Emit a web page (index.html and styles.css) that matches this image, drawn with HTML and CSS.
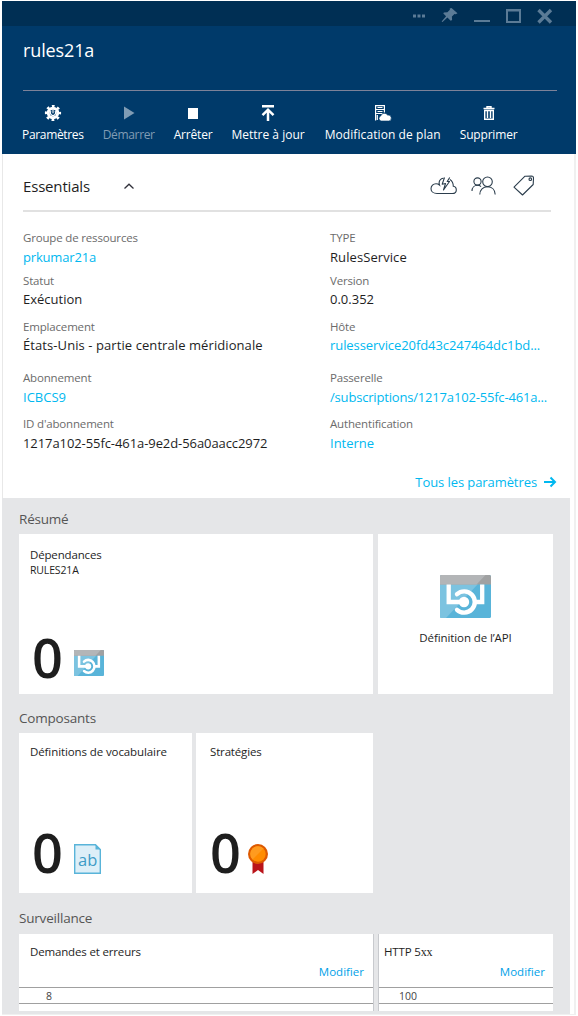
FILE: index.html
```html
<!DOCTYPE html>
<html lang="fr">
<head>
<meta charset="utf-8">
<title>rules21a</title>
<link rel="stylesheet" href="styles.css">
</head>
<body>
<svg class="defs" width="0" height="0">
  <symbol id="api" viewBox="0 0 51 43">
    <rect width="51" height="43" rx="1.5" fill="#59b4d9"/>
    <path d="M0 9h38L6 43H1.500Q0 43 0 41.500z" fill="#7cc3e0"/>
    <path d="M0 9.500V1.500Q0 0 1.500 0h48Q51 0 51 1.500v8z" fill="#a0a1a2"/>
    <path d="M0 9.500V1.500Q0 0 1.500 0H45.500L36.500 9.500z" fill="#b3b5b7"/>
    <path d="M8.700 9.500v17.500H24" fill="none" stroke="#fff" stroke-width="4.300"/>
    <path d="M42.200 9.500v17.500h-8" fill="none" stroke="#fff" stroke-width="4.300"/>
    <circle cx="24" cy="27" r="5.200" fill="#fff"/>
    <path d="M17 19.200A10.600 10.600 0 1 1 17 34.800" fill="none" stroke="#fff" stroke-width="4.400" stroke-linecap="round"/>
  </symbol>
</svg>
<div class="blade">
  <header class="header">
    <div class="titlebar">
      <svg width="144" height="24" viewBox="0 0 144 24" fill="#5b7b96">
        <path d="M3 13.500h3v3H3zM7.500 13.500h3v3h-3zM12 13.500h3v3h-3z"/>
        <path d="M41.500 7l6 5.300-1.800.9-1.200-.3-2.600 2.600.2 3.500-1.400.7-3.300-3.300-4.900 4.600-.9-.4 4.500-5.400-2.800-2.600.6-1.200 3.500-.1 2.500-2.500-.2-1.200z"/>
        <path d="M64 19h16v2H64z"/>
        <path d="M96 8h15v14H96zM98 10.500v9.500h11v-9.500z" fill-rule="evenodd"/>
        <path d="M128.500 9l12.500 12.500M141 9l-12.500 12.500" stroke="#5b7b96" stroke-width="3.400"/>
      </svg>
    </div>
    <h1 class="title">rules21a</h1>
    <nav class="toolbar">
      <a class="cmd tight"><svg width="18" height="18" viewBox="0 0 18 18"><circle cx="9" cy="9" r="4.700" fill="none" stroke="#fff" stroke-width="3"/><circle cx="9" cy="9" r="6.900" fill="none" stroke="#fff" stroke-width="2.400" stroke-dasharray="2.700 2.720" stroke-dashoffset="1.350"/><path d="M9 5.500v3.800M11 7.200a2.600 2.600 0 1 1-4 0" fill="none" stroke="#fff" stroke-width="1.100"/></svg><span>Paramètres</span></a>
      <a class="cmd tight off"><svg width="18" height="18" viewBox="0 0 18 18"><path d="M4 2.500v13L14.500 9z" fill="#809cb4"/></svg><span>Démarrer</span></a>
      <a class="cmd snug"><svg width="18" height="18" viewBox="0 0 18 18"><path d="M4 4h10v11H4z" fill="#fff"/></svg><span>Arrêter</span></a>
      <a class="cmd"><svg width="18" height="18" viewBox="0 0 18 18"><path d="M3 1h12v2.500H3z" fill="#fff"/><path d="M9 17V6M3.500 11.200L9 5.700l5.500 5.500" fill="none" stroke="#fff" stroke-width="2.500"/></svg><span>Mettre à jour</span></a>
      <a class="cmd wide plan"><svg width="18" height="18" viewBox="0 0 18 18"><path d="M1.600 1.600h8.800v7M1.600 1v15.500M1.600 5.500h8.800M1.600 9.500h7M10.400 2v6M3.500 3.500h5M3.500 7.500h5M3.300 11v5" fill="none" stroke="#fff" stroke-width="1.200"/><path d="M7 17a2.600 2.600 0 0 1-.3-5 3.800 3.800 0 0 1 6.900-.9 3 3 0 0 1 1.300 5.900z" fill="#fff" stroke="#003a6a" stroke-width=".6"/></svg><span>Modification de plan</span></a>
      <a class="cmd snug"><svg width="18" height="18" viewBox="0 0 18 18"><path d="M3.500 4.500h11M7 4V2.700h4V4M4.700 6.500v8.800h8.600V6.500zM7.500 7v7M10.500 7v7" fill="none" stroke="#fff" stroke-width="1.400"/></svg><span>Supprimer</span></a>
    </nav>
  </header>

  <div class="body">
  <section class="essentials">
    <div class="ess-head">
      <h2 class="ess-title">Essentials</h2>
      <svg width="12" height="8" viewBox="0 0 12 8"><path d="M1.500 6.500L6 2.200l4.500 4.300" fill="none" stroke="#32323c" stroke-width="1.300"/></svg>
      <svg class="ess-icons" width="106" height="24" viewBox="0 0 106 24" fill="none" stroke="#2b3d4c" stroke-width="1.100">
        <path d="M7 20.500c-3.400 0-6-2-6-4.800 0-3 2.300-5 5-5 1.600 0 2.300.3 3.500 1.300-.8-2.500-.5-4.200 1.200-5.700 1-.9 2-1.100 2.900-1.100M19.800 6.500c2.500 1.500 3.500 4 3.500 6.700 2.300.3 3 2 3 3.700 0 2.300-1.500 3.600-4 3.600H7"/>
        <path d="M14.500 4.500l-2.300 6.800 3.300-.8-2 6.500 6-8.500h-2.300l2.500-4" stroke-linejoin="round"/>
        <circle cx="47.500" cy="8.500" r="3.600"/><path d="M42 18c0-3.500 2.500-5.700 5.500-5.700 1.500 0 2.700.5 3.500 1.300"/>
        <circle cx="57.500" cy="8.800" r="4.800"/><path d="M49.800 21.500c0-4.800 3.300-7.700 7.700-7.700s7.500 2.900 7.700 7.700"/>
        <path d="M84 14.200L95 3.200l6.500-.2c1.200 0 2 .8 2 2l-.3 6.500-10.700 10.500z" stroke-linejoin="round"/><circle cx="100.300" cy="6.200" r="1.300"/>
      </svg>
    </div>
    <dl class="props">
      <div><dt>Groupe de ressources</dt><dd class="link snug">prkumar21a</dd></div>
      <div><dt>TYPE</dt><dd class="wide">RulesService</dd></div>
      <div class="close"><dt>Statut</dt><dd>Exécution</dd></div>
      <div class="close"><dt>Version</dt><dd>0.0.352</dd></div>
      <div class="close"><dt>Emplacement</dt><dd class="wide">États-Unis - partie centrale méridionale</dd></div>
      <div class="close"><dt>Hôte</dt><dd class="link slim">rulesservice20fd43c247464dc1bd...</dd></div>
      <div><dt>Abonnement</dt><dd class="link">ICBCS9</dd></div>
      <div><dt>Passerelle</dt><dd class="link snug">/subscriptions/1217a102-55fc-461a...</dd></div>
      <div><dt>ID d'abonnement</dt><dd class="slim">1217a102-55fc-461a-9e2d-56a0aacc2972</dd></div>
      <div><dt>Authentification</dt><dd class="link">Interne</dd></div>
    </dl>
    <a class="all link"><span class="slim">Tous les paramètres</span><svg width="13" height="12" viewBox="0 0 13 12"><path d="M0 6h11M6.500 1.500L11 6l-4.500 4.500" fill="none" stroke="#00b8f0" stroke-width="2"/></svg></a>
  </section>

  <main class="lens">
    <h3 class="group">Résumé</h3>
    <div class="tiles summary">
      <article class="tile">
        <h4>Dépendances</h4><p class="sub">RULES21A</p>
        <div class="count"><b>0</b><svg class="i-api" width="30" height="26" viewBox="0 0 51 43" preserveAspectRatio="none"><use href="#api" width="51" height="43"/></svg></div>
      </article>
      <article class="tile center">
        <svg width="51" height="43"><use href="#api"/></svg>
        <h4 class="slim">Définition de l’API</h4>
      </article>
    </div>
    <h3 class="group">Composants</h3>
    <div class="tiles parts">
      <article class="tile">
        <h4 class="slim">Définitions de vocabulaire</h4>
        <div class="count"><b>0</b><svg width="27" height="30" viewBox="0 0 27 30"><path d="M.7.700h20.800l4.800 4.800v23.800H.7z" fill="#ddeff8" stroke="#59b4d9" stroke-width="1.400"/><path d="M21.500.500v5h5z" fill="#59b4d9"/><text class="ab" x="4" y="22">ab</text></svg></div>
      </article>
      <article class="tile policies">
        <h4>Stratégies</h4>
        <div class="count"><b>0</b><svg width="20" height="30" viewBox="0 0 20 30"><path d="M4.500 17h11v13l-5.500-4-5.500 4z" fill="#ba141a"/><circle cx="10" cy="10" r="10" fill="#dd5900"/><circle cx="10" cy="10" r="7.700" fill="#ff8c00"/><path d="M4.500 15.500A7.700 7.700 0 0 1 15.500 4.500z" fill="#ff9b1f"/></svg></div>
      </article>
    </div>
    <h3 class="group last">Surveillance</h3>
    <div class="tiles charts">
      <article class="tile chart"><h4>Demandes et erreurs</h4><a class="edit">Modifier</a><div class="axis">8</div></article>
      <article class="tile chart second"><h4>HTTP 5<i>xx</i></h4><a class="edit">Modifier</a><div class="axis">100</div></article>
    </div>
  </main>
  </div>
</div>
</body>
</html>
```
FILE: styles.css
```css
* { box-sizing: border-box; }
body {
  margin: 0;
  background: #fff;
  color: #1e1e1e;
  font-family: "Open Sans", "Noto Sans", sans-serif;
  font-size: 13px;
}
h1, h2, h3, h4, p, dl, dd { margin: 0; font-weight: 400; }
svg { display: block; flex: none; }
.defs { position: absolute; }
.link { color: #00b8f0; }

.blade {
  width: 574px;
  height: 1014px;
  margin: 1px 0 0 2px;
  overflow: hidden;
}
.header {
  height: 153px;
  background: #003a6a;
  color: #fff;
}
.titlebar {
  display: flex;
  justify-content: flex-end;
  height: 25px;
  padding-right: 22px;
  background: #002f54;
}
.title {
  height: 65px;
  margin: 0 19px 0 21px;
  padding-top: 11px;
  border-bottom: 1px solid #7d8299;
  font-size: 18px;
  line-height: 26px;
  letter-spacing: -.12px;
}
.toolbar { display: flex; gap: 19px; padding: 13px 0 0 20px; }
.cmd {
  display: flex;
  flex-direction: column;
  align-items: center;
  gap: 4px;
  font-size: 12px;
  line-height: 18px;
  white-space: nowrap;
}
.plan { margin-left: 1px; }
.off { color: #809cb4; }
.tight { letter-spacing: -.33px; }
.snug { letter-spacing: -.18px; }
.slim { letter-spacing: -.08px; }
.wide { letter-spacing: .08px; }

.body {
  height: 861px;
  border-right: 2px solid #f0f0f0;
  border-bottom: 1px solid #f0f0f0;
}
.essentials {
  height: 344px;
  padding: 0 17px 0 20px;
  border-left: 1px solid #e8e8e8;
}
.ess-head {
  display: flex;
  align-items: center;
  height: 58px;
  margin-right: 6px;
  padding-top: 8px;
  border-bottom: 2px solid #e1e1e1;
}
.ess-title { width: 100px; font-size: 15px; letter-spacing: -.17px; }
.ess-icons { margin-left: auto; margin-right: 15px; margin-bottom: 2px; }
.props {
  display: grid;
  grid-template-columns: 307px 1fr;
  grid-template-rows: 43px 46px 51px 46px 46px;
  padding-top: 17px;
}
dt { color: #6b6b6b; font-size: 11.5px; line-height: 18px; letter-spacing: -.17px; }
dd { font-size: 13px; line-height: 20px; white-space: nowrap; }
.close dd { margin-top: -1px; }
.all {
  display: flex;
  justify-content: flex-end;
  align-items: center;
  gap: 7px;
  height: 20px;
  margin-top: 11px;
}

.lens {
  width: 568px;
  height: 516px;
  padding: 9px 0 0 17px;
  background: #e5e6e8;
}
.group { height: 27px; font-size: 13.5px; line-height: 24px; letter-spacing: -.2px; color: #555; }
.last { height: 28px; }
.tiles { display: grid; margin-bottom: 12px; }
.summary { grid-template-columns: 354px 175px; gap: 5px; }
.parts { grid-template-columns: 173px 177px; gap: 4px; margin-bottom: 13px; }
.charts { grid-template-columns: 355px 175px; gap: 4px; }
.tile {
  display: flex;
  flex-direction: column;
  height: 160px;
  padding: 12px 11px 12px;
  background: #fff;
}
.parts .tile { padding: 10px 11px 16px; }
.tile h4 { font-size: 11.5px; line-height: 18px; letter-spacing: -.16px; }
.tile h4.slim { letter-spacing: -.1px; }
.sub { margin-top: -1px; font-size: 10.5px; line-height: 14px; letter-spacing: -.15px; }
.count { display: flex; align-items: flex-end; gap: 10px; height: 46px; margin-top: auto; padding-left: 2px; }
.count b { width: 32px; font-size: 54px; font-weight: 600; line-height: 50px; }
.count svg { margin-bottom: 3px; }
.count .i-api { margin-bottom: 6px; }
.parts .policies { padding-left: 14px; }
.policies .count { gap: 6px; padding-left: 0; }
.ab { font-size: 16.5px; fill: #3e9cc7; }
.tile.center { align-items: center; gap: 11px; padding-top: 41px; }
.tile.chart { height: 77px; padding: 9px 0 0; border-right: 1px solid #c8cace; }
.chart h4 { padding-left: 11px; }
.tile.second { border-right: 0; border-left: 1px solid #c8cace; }
.second h4 { padding-left: 5px; }
.chart i { font: 12px "Liberation Serif", serif; }
.edit { height: 20px; margin-top: 1px; padding-right: 9px; color: #00a1e8; font-size: 11.5px; line-height: 20px; text-align: right; }
.second .edit { padding-right: 8px; }
.axis {
  height: 17px;
  margin-top: 5px;
  padding-left: 27px;
  border: solid #a0a0a0;
  border-width: 1px 0;
  color: #444;
  font-size: 10.5px;
  line-height: 16px;
}
.second .axis { padding-left: 20px; }
```
